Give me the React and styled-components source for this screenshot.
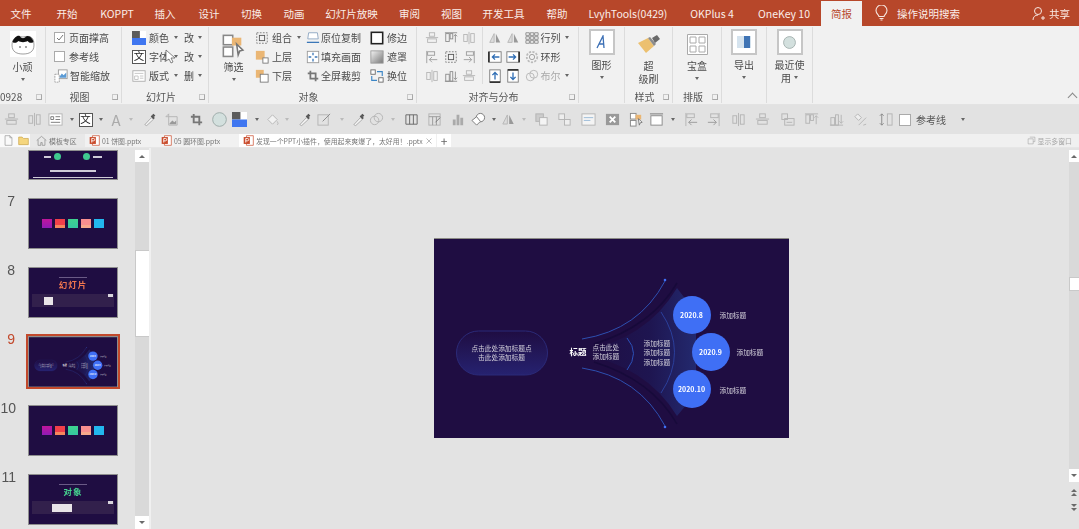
import React from 'react';
import styled, { createGlobalStyle } from 'styled-components';

const FONT = `"Noto Sans CJK SC", "Noto Sans", sans-serif`;

const GlobalStyle = createGlobalStyle`
  html, body { margin: 0; padding: 0; background: #e3e3e3; overflow: hidden; }
  * { box-sizing: border-box; }
`;

const Page = styled.div`
  width: 1079px;
  height: 529px;
  display: flex;
  flex-direction: column;
  position: relative;
  overflow: hidden;
  font-family: ${FONT};
  color: #444;
  filter: blur(0.4px);
`;

/* title bar */
const TitleBar = styled.div`
  height: 26px;
  flex: none;
  display: flex;
  background: #b7472a;
  color: #fbeee9;
  font-size: 10.5px;
`;
const TabItem = styled.div`
  width: ${p => p.$w}px;
  height: ${p => (p.$active ? 25 : 26)}px;
  margin-top: ${p => (p.$active ? 1 : 0)}px;
  display: flex;
  align-items: center;
  justify-content: center;
  white-space: nowrap;
  background: ${p => (p.$active ? '#f1f1f1' : 'transparent')};
  color: ${p => (p.$active ? '#b7472a' : 'inherit')};
`;
const SearchHint = styled.div`
  display: flex;
  align-items: center;
  gap: 9px;
  margin-left: 13px;
  width: 151px;
  white-space: nowrap;
`;
const ShareBox = styled.div`
  display: flex;
  align-items: center;
  gap: 3px;
  white-space: nowrap;
  margin-left: 6px;
`;

/* ribbon */
const Ribbon = styled.div`
  height: 78px;
  flex: none;
  display: flex;
  padding-top: 1px;
  background: #f1f1f1;
  position: relative;
`;
const Group = styled.section`
  width: ${p => p.$w}px;
  height: 76px;
  flex: none;
  display: flex;
  flex-direction: column;
  border-right: 1px solid #dcdcdc;
`;
const GroupBody = styled.div`
  flex: 1;
  min-height: 0;
  display: flex;
  padding-left: ${p => p.$pl || 0}px;
  gap: ${p => p.$gap || 0}px;
`;
const GroupLabel = styled.div`
  height: 13px;
  flex: none;
  display: flex;
  align-items: center;
  justify-content: ${p => (p.$left ? 'flex-start' : 'center')};
  padding-right: ${p => (p.$left ? 0 : 8)}px;
  font-size: 10px;
  line-height: 13px;
  color: #555;
  position: relative;
`;
const Launcher = styled.span`
  position: absolute;
  right: 3px;
  top: 4px;
  width: 6px;
  height: 6px;
  border: 1px solid #a8a8a8;
  border-top-color: #c8c8c8;
  border-left-color: #c8c8c8;
`;
const Col = styled.div`
  width: ${p => (p.$w ? `${p.$w}px` : 'auto')};
  display: flex;
  flex-direction: column;
  padding-top: 1px;
`;
const Row = styled.div`
  height: 19px;
  display: flex;
  align-items: center;
  gap: ${p => p.$gap ?? 3}px;
  font-size: 10px;
  white-space: nowrap;
  color: ${p => (p.$muted ? '#a9a9a9' : '#4a4a4a')};
`;
const Check = styled.span`
  width: ${p => p.$s || 11}px;
  height: ${p => p.$s || 11}px;
  flex: none;
  display: flex;
  align-items: center;
  justify-content: center;
  margin-right: 2px;
  background: #fff;
  border: 1px solid #aaa;
`;
const Caret = styled.span`
  width: 0;
  height: 0;
  flex: none;
  margin-left: ${p => p.$ml || 0}px;
  border-left: 2.5px solid transparent;
  border-right: 2.5px solid transparent;
  border-top: 3px solid ${p => (p.$light ? '#bbb' : '#666')};
`;
const WenBox = styled.span`
  width: 14px;
  height: 14px;
  flex: none;
  display: flex;
  align-items: center;
  justify-content: center;
  font-size: 10.5px;
  line-height: 1;
  color: #222;
  background: #fff;
  border: 1px solid #555;
`;
const BigBtn = styled.div`
  width: 100%;
  display: flex;
  flex-direction: column;
  align-items: center;
  font-size: 10px;
  line-height: 13px;
  color: #4a4a4a;
  text-align: center;
  padding-top: ${p => p.$pt ?? 2}px;
`;
const Framed = styled.div`
  width: 26px;
  height: 26px;
  display: flex;
  align-items: center;
  justify-content: center;
  background: #fff;
  border: 2px solid #c6c6c6;
  margin-bottom: 3px;
`;
const AvatarBox = styled.div`
  width: 26px;
  height: 26px;
  margin-bottom: 3px;
  background: #fff;
`;
const BigIconSlot = styled.div`
  height: ${p => p.$h}px;
  display: flex;
  align-items: center;
  justify-content: center;
`;
const CaretLine = styled.div`
  height: 13px;
  display: flex;
  align-items: center;
  justify-content: center;
  gap: 3px;
`;
const AlignGrid = styled.div`
  display: grid;
  grid-template-columns: repeat(${p => p.$cols}, ${p => p.$cell}px);
  grid-auto-rows: 19px;
  align-items: center;
  justify-items: center;
  padding-top: 1px;
  padding-right: ${p => (p.$rule ? 3 : 0)}px;
  margin-right: 3px;
  border-right: ${p => (p.$rule ? '1px solid #dcdcdc' : 'none')};
  height: 57px;
`;
const Collapse = styled.span`
  position: absolute;
  right: 3px;
  bottom: 3px;
  width: 7px;
  height: 7px;
  border-left: 1px solid #888;
  border-top: 1px solid #888;
  transform: rotate(45deg);
`;
const Pointer = styled.svg`
  position: absolute;
  left: 165px;
  top: 23px;
`;

/* quick access bar */
const Qat = styled.div`
  height: 29px;
  flex: none;
  margin-top: 1px;
  display: flex;
  align-items: center;
  background: #e2e2e2;
`;
const QatSlot = styled.div`
  width: ${p => p.$w}px;
  flex: none;
  display: flex;
  align-items: center;
  justify-content: center;
`;
const QatLabel = styled.span`
  font-size: 10px;
  color: #555;
  white-space: nowrap;
  margin-left: 3px;
  margin-right: 15px;
`;
const FontA = styled.span`
  font-size: 15px;
  line-height: 1;
  color: #aaa;
`;

/* document tabs */
const DocBar = styled.div`
  height: 14px;
  flex: none;
  display: flex;
  align-items: stretch;
  background: #f0f0f0;
  font-size: 6.9px;
  color: #777;
  border-bottom: 1px solid #e6e6e6;
`;
const DocStart = styled.div`
  width: 30px;
  display: flex;
  align-items: center;
  gap: 4px;
  padding-left: 3px;
  background: #fafafa;
`;
const DocTab = styled.div`
  width: ${p => p.$w}px;
  display: flex;
  align-items: center;
  gap: ${p => p.$gap ?? 2}px;
  padding-left: ${p => p.$pl || 5}px;
  white-space: nowrap;
  overflow: hidden;
  background: ${p => p.$bg};
`;
const PlusTab = styled.div`
  width: 14px;
  margin-left: 1px;
  display: flex;
  align-items: center;
  justify-content: center;
  background: #fff;
  font-size: 12px;
  line-height: 1;
  color: #666;
`;
const MultiWin = styled.div`
  margin-left: auto;
  padding-right: 7px;
  display: flex;
  align-items: center;
  gap: 2px;
  color: #a5a5a5;
`;

/* work area */
const Work = styled.div`
  flex: 1;
  min-height: 0;
  display: flex;
`;
const Sidebar = styled.div`
  width: 135px;
  flex: none;
  overflow: hidden;
  display: flex;
  flex-direction: column;
  gap: 18px;
  padding-top: 2px;
`;
const ThumbRow = styled.div`
  display: flex;
  flex: none;
`;
const ThumbNo = styled.div`
  width: 16px;
  margin-right: 12px;
  text-align: right;
  padding-right: ${p => (p.$wide ? 0 : 1)}px;
  font-family: "Liberation Sans", sans-serif;
  font-size: 14px;
  line-height: 16px;
  margin-top: -5px;
  color: ${p => (p.$active ? '#c2492c' : '#555')};
`;
const Thumb = styled.div`
  width: 90px;
  height: ${p => p.$h || 51}px;
  flex: none;
  display: flex;
  flex-direction: column;
  align-items: center;
  position: relative;
  overflow: ${p => (p.$active ? 'visible' : 'hidden')};
  background: #1f0d42;
  border: 1px solid #8e8e8e;
  outline: ${p => (p.$active ? '2px solid #c2492c' : 'none')};
  outline-offset: 0;
`;
const Swatches = styled.div`
  flex: 1;
  display: flex;
  align-items: center;
  justify-content: center;
  gap: 3px;
`;
const Swatch = styled.span`
  width: 10px;
  height: 9px;
  background: ${p => p.$c};
`;
const ThumbCaption = styled.div`
  width: 28px;
  margin-top: 9px;
  height: 1px;
  background: #6a5a86;
`;
const ThumbTitle = styled.div`
  font-size: 8.5px;
  line-height: 10px;
  margin-top: 1px;
  font-weight: 700;
  letter-spacing: 1px;
  color: ${p => p.$c};
`;
const ThumbBand = styled.div`
  width: 82px;
  height: 13px;
  margin-top: 5px;
  display: flex;
  align-items: center;
  padding-left: ${p => p.$pl}px;
  background: #32204c;
`;
const ThumbNote = styled.span`
  width: ${p => p.$w}px;
  height: 8px;
  background: #e8e4e8;
`;
const ThumbCorner = styled.span`
  position: absolute;
  right: 4px;
  top: 26px;
  width: 5px;
  height: 3px;
  background: #d8d4dc;
`;
const MiniTop = styled.div`
  width: 100%;
  height: 100%;
  display: flex;
  flex-direction: column;
  align-items: center;
  justify-content: flex-end;
  padding-bottom: 1px;
  gap: 5px;
`;
const MiniDots = styled.div`
  display: flex;
  align-items: center;
  gap: 3px;
  margin-bottom: 5px;
`;
const MiniDot = styled.span`
  width: 7px;
  height: 7px;
  border-radius: 50%;
  background: #3fc98f;
`;
const MiniGap = styled.span`
  width: 16px;
`;
const MiniBar = styled.span`
  width: ${p => p.$w}px;
  height: ${p => p.$h || 2}px;
  background: #cfcbd8;
`;
const ScaledSlide = styled.div`
  position: absolute;
  left: 0;
  top: 0;
  transform: scale(0.2479);
  transform-origin: 0 0;
  width: 355px;
  height: 200px;
`;
const Scroll = styled.div`
  width: ${p => p.$w}px;
  flex: none;
  display: flex;
  flex-direction: column;
  background: #d9d9d9;
  margin-top: 2px;
`;
const ScrollBtn = styled.div`
  height: ${p => p.$h || 12}px;
  flex: none;
  background: #fff;
  display: flex;
  align-items: center;
  justify-content: center;
`;
const ScrollThumb = styled.div`
  height: ${p => p.$h}px;
  flex: none;
  margin-top: ${p => p.$top}px;
  background: #fff;
  border: 1px solid #c9c9c9;
  border-right: none;
`;
const ScrollSpace = styled.div`
  flex: 1;
`;
const ArrowUp = styled.span`
  width: 0;
  height: 0;
  border-left: 3.5px solid transparent;
  border-right: 3.5px solid transparent;
  border-bottom: 3.5px solid #6a6a6a;
`;
const ArrowDown = styled(ArrowUp)`
  border-bottom: none;
  border-top: 3.5px solid #6a6a6a;
`;
const Divider = styled.div`
  width: 2px;
  flex: none;
  background: #f0f0f0;
`;
const Canvas = styled.div`
  flex: 1;
  min-width: 0;
  display: flex;
  align-items: center;
  justify-content: center;
  padding-left: 2px;
  padding-bottom: 2px;
`;
const RightRail = styled.div`
  width: 10px;
  flex: none;
  display: flex;
  flex-direction: column;
`;
const RailTrack = styled(Scroll)`
  height: 332px;
`;
const RailJump = styled.div`
  height: 15px;
  display: flex;
  flex-direction: column;
  align-items: center;
  justify-content: center;
  gap: 1px;
  margin-top: ${p => p.$mt || 0}px;
`;

/* the slide itself is a free canvas */
const SlideFrame = styled.div`
  width: 355px;
  height: 200px;
  flex: none;
  position: relative;
  background: #1f0d42;
  border-top: 1px solid #8b8b85;
  overflow: hidden;
`;
const SlideArt = styled.svg`
  position: absolute;
  left: 0;
  top: -1px;
`;
const SlideText = styled.div`
  position: absolute;
  left: ${p => p.$x}px;
  top: ${p => p.$y}px;
  width: ${p => p.$w}px;
  font-size: ${p => p.$fs || 6.7}px;
  line-height: ${p => p.$lh || 9.6}px;
  font-weight: ${p => (p.$bold ? 700 : 400)};
  color: ${p => (p.$bold ? '#fff' : '#d5d2dc')};
  text-align: ${p => p.$align || 'left'};
  white-space: nowrap;
`;
const DateNode = styled.div`
  position: absolute;
  left: ${p => p.$x - 19}px;
  top: ${p => p.$y - 20}px;
  width: 38px;
  height: 38px;
  display: flex;
  align-items: center;
  justify-content: center;
  border-radius: 50%;
  background: #3f6ff5;
  color: #fff;
  font-size: 7px;
  font-weight: 700;
`;

const GLYPHS = {
  alignTop: <><rect x="5" y="2" width="6" height="4" /><rect x="3" y="9" width="10" height="4" /><path d="M1 7.500h14" /></>,
  alignMid: <><rect x="2" y="4" width="4" height="8" /><rect x="10" y="3" width="4" height="10" /><path d="M8 1v14" /></>,
  textBox: <><rect x="1" y="2" width="14" height="12" fill="#fff" /><path d="M3 5h3v3H3zM8 5h5M8 8h5M3 11h10" stroke="#777" /></>,
  dropper: <><path d="M3 13.500l7-7.500 2 2-7 6.500z" fill="#f4f4f4" stroke="#aaa" /><path d="M10 4l3 3M11.500 2.500l2 2" stroke="#555" strokeWidth="2" /></>,
  picture: <><path d="M2 5l3-3v3zM5 5h9v9H5z" /><path d="M6 12l3-3 2 2 2-2v4H6z" fill="#999" stroke="none" /></>,
  crop: <path d="M5 2v9h9M2 5h9v9" stroke="#777" strokeWidth="2" />,
  bucket: <><path d="M3 8l5-5 5 5-5 5z" fill="#f2f2f2" /><path d="M13 10c1 2 1.500 3 0 3.500" /></>,
  penBox: <><rect x="1" y="3" width="11" height="11" /><path d="M6 10l8-8" stroke="#888" /></>,
  circles: <><circle cx="6" cy="9" r="4.500" /><circle cx="10" cy="6" r="4.500" /></>,
  columns: <path d="M2 3h12v10H2zM6 3v10M10 3v10" stroke="#666" />,
  table: <><rect x="2" y="2" width="12" height="12" /><path d="M2 5h12M6 5v9M10 5v9" stroke="#999" /><path d="M9 11l5-5" stroke="#777" /></>,
  bars: <path d="M3 8h3v6H3zM7 3h3v11H7zM11 6h3v8h-3z" fill="#aaa" stroke="none" />,
  shapes: <><circle cx="10" cy="6" r="4.500" fill="#fff" stroke="#777" /><path d="M1 9l5-4 4 5-4 4z" fill="#fff" stroke="#777" /></>,
  flip: <><path d="M7 3v10H2z" fill="#ddd" /><path d="M9 3v10h5z" fill="#999" stroke="none" /></>,
  group: <><rect x="2" y="2" width="8" height="8" fill="#ccc" /><rect x="6" y="6" width="8" height="8" fill="#f4f4f4" /></>,
  ungroup: <><rect x="2" y="2" width="6" height="6" fill="#eee" /><rect x="8" y="8" width="6" height="6" fill="#eee" /></>,
  panel: <><rect x="1" y="2" width="14" height="12" fill="#f4f4f4" /><path d="M3 6h10M3 9h7" stroke="#9bbbd8" /></>,
  xBox: <><rect x="1" y="2" width="14" height="12" fill="#999" stroke="none" /><path d="M5 5l6 6M11 5l-6 6" stroke="#fff" strokeWidth="2" /></>,
  select: <><rect x="1.500" y="1.500" width="6" height="6" fill="#fff" stroke="#888" /><rect x="1.500" y="9" width="6" height="6" fill="#fff" stroke="#888" /><path d="M7 3h6v5H7z" fill="#eab674" stroke="none" /><path d="M10 7l4 4-2 .5-1 2.500z" fill="#fff" stroke="#777" /></>,
  rect: <><path d="M1 2h14" stroke="#777" /><rect x="2" y="4" width="12" height="10" fill="#fff" stroke="#888" /></>,
  alignLeft: <><path d="M2 1v14" /><rect x="3" y="2" width="8" height="4" /><path d="M14 11H5M8 8l-3 3 3 3" stroke="#9a9a9a" /></>,
  alignRight: <><path d="M14 1v14" /><rect x="5" y="2" width="8" height="4" /><path d="M2 11h9M8 8l3 3-3 3" stroke="#9a9a9a" /></>,
  slidesDist: <><rect x="2" y="2" width="6" height="6" /><rect x="5" y="7" width="10" height="7" /><path d="M7 11h6" /></>,
  upBars: <><rect x="2" y="3" width="4" height="9" /><rect x="7" y="3" width="3" height="6" /><path d="M13 13V4M11 6l2-2 2 2M1 2h14" /></>,
  downBars: <><rect x="2" y="6" width="4" height="8" /><rect x="7" y="3" width="3" height="11" /><path d="M13 3v9M11 10l2 2 2-2M1 14h14" /></>,
  bucketPen: <><path d="M2 5l3-3 4 4-3 3z" fill="#eee" /><path d="M6 14l8-8M14 13l-3 1" /></>,
  spread: <><rect x="10" y="2" width="5" height="12" /><path d="M4 2v12M2 4l2-2 2 2M2 12l2 2 2-2" stroke="#888" /></>,
  boxDash: <><path d="M2 2h12v12H2z" strokeDasharray="2 1.500" stroke="#777" /><rect x="5" y="5" width="6" height="6" stroke="#555" /></>,
  layerUp: <><rect x="1" y="1" width="10" height="10" fill="#eab674" stroke="none" /><rect x="9" y="9" width="6" height="6" fill="#fff" stroke="#777" /></>,
  layerDown: <><rect x="1" y="1" width="9" height="9" fill="#eab674" stroke="none" /><rect x="6" y="6" width="9" height="9" fill="#fff" stroke="#777" /></>,
  placeCopy: <><path d="M3 2h10l1 7H2z" fill="#fff" stroke="#8aa4c0" /><path d="M1 13h14" stroke="#3b77b8" strokeWidth="1.500" /></>,
  fillFrame: <><rect x="1.500" y="1.500" width="13" height="13" fill="#fff" stroke="#999" /><path d="M8 3v3M8 10v3M3 8h3M10 8h3" stroke="#3b77b8" strokeWidth="1.500" /></>,
  edgeBox: <rect x="1.500" y="1.500" width="13" height="13" fill="#fff" stroke="#222" strokeWidth="1.800" />,
  maskBox: <rect x="1" y="1" width="14" height="14" fill="url(#maskFill)" stroke="#999" />,
  swap: <><rect x="1" y="1" width="5" height="5" fill="#fff" stroke="#666" /><rect x="10" y="10" width="5" height="5" fill="#fff" stroke="#666" /><path d="M8 3h6v5M8 13H2V8" stroke="#3b86c6" strokeWidth="1.300" /></>,
  arrowLeftBox: <><rect x="1" y="2" width="14" height="12" fill="#fff" stroke="#777" /><path d="M1 2v12" stroke="#333" strokeWidth="2" /><path d="M13 8H5M8 5L5 8l3 3" stroke="#2f6eb5" strokeWidth="1.500" /></>,
  arrowRightBox: <><rect x="1" y="2" width="14" height="12" fill="#fff" stroke="#777" /><path d="M15 2v12" stroke="#333" strokeWidth="2" /><path d="M3 8h8M8 5l3 3-3 3" stroke="#2f6eb5" strokeWidth="1.500" /></>,
  arrowUpBox: <><rect x="2" y="1" width="12" height="14" fill="#fff" stroke="#777" /><path d="M2 15h12" stroke="#333" strokeWidth="2" /><path d="M8 12V4M5 7l3-3 3 3" stroke="#2f6eb5" strokeWidth="1.500" /></>,
  arrowDownBox: <><rect x="2" y="1" width="12" height="14" fill="#fff" stroke="#777" /><path d="M2 1h12" stroke="#333" strokeWidth="2" /><path d="M8 4v8M5 9l3 3 3-3" stroke="#2f6eb5" strokeWidth="1.500" /></>,
  grid: <path d="M1 2h4v3H1zM6 2h4v3H6zM11 2h4v3h-4zM1 6.500h4v3H1zM6 6.500h4v3H6zM11 6.500h4v3h-4zM1 11h4v3H1zM6 11h4v3H6zM11 11h4v3h-4z" stroke="#888" />,
  ring: <><circle cx="8" cy="8" r="3" stroke="#999" /><circle cx="8" cy="8" r="6" strokeDasharray="2.500 1.500" strokeWidth="2" stroke="#bbb" /></>,
  layout: <><rect x="1" y="2" width="14" height="12" fill="#fff" stroke="#aaa" /><path d="M3 5h10M3 8h4v4H3zM9 8h4M9 10.500h4" stroke="#c0c0c0" /></>,
  viewZoom: <><rect x="5" y="1" width="10" height="10" fill="#fff" stroke="#999" /><path d="M6 9l3-4 2 2 3-3v6H6z" fill="#5b9bd5" stroke="none" /><path d="M1 6h5v9H1z" fill="#fff" stroke="#999" strokeDasharray="2 1" /></>,
  doc: <path d="M3 1h7l3 3v11H3zM10 1v3h3" stroke="#999" />,
  folder: <path d="M1 3h5l2 2h7v9H1z" fill="#f5d67e" stroke="#c9a34a" />,
  home: <path d="M1 8l7-6 7 6M3 7v8h4v-4h2v4h4V7" stroke="#888" />,
  multi: <path d="M5 2h9v8h-3M2 5h9v9H2z" stroke="#a0a0a0" />,
  close: <path d="M3 3l10 10M13 3L3 13" stroke="#777" />,
  pptx: <><path d="M5 1h10v14H5z" fill="#fff" stroke="#c94a2a" /><path d="M1 3h9v10H1z" fill="#c94a2a" stroke="none" /><path d="M4 11V5h2.500a1.600 1.600 0 010 3.500H4" stroke="#fff" strokeWidth="1.300" /></>,
};

function Glyph({ name, size = 14, stroke = '#b4b4b4' }) {
  return (
    <svg width={size} height={size} viewBox="0 0 16 16" fill="none" stroke={stroke}>
      {GLYPHS[name]}
    </svg>
  );
}

function Swatchy({ size = 15 }) {
  return (
    <svg width={size} height={size} viewBox="0 0 16 16">
      <rect width="16" height="16" fill="#fff" />
      <rect width="9" height="8" fill="#5c5c5c" />
      <rect y="8" width="16" height="8" fill="#3f76f0" />
    </svg>
  );
}

function SageCircle({ size = 14 }) {
  return (
    <svg width={size} height={size} viewBox="0 0 16 16">
      <circle cx="8" cy="8" r="7.300" fill="#d3e0de" stroke="#9caaa8" />
    </svg>
  );
}

const TABS = [
  ['文件', 42], ['开始', 50], ['KOPPT', 50], ['插入', 46], ['设计', 42], ['切换', 43],
  ['动画', 42], ['幻灯片放映', 73], ['审阅', 43], ['视图', 41], ['开发工具', 63],
  ['帮助', 44], ['LvyhTools(0429)', 98], ['OKPlus 4', 70], ['OneKey 10', 74],
];

// icon name and the x of its centre on the bar
const QAT_ITEMS = [
  ['alignTop', 10], ['alignMid', 34], ['textBox', 58], ['caret', 72], ['wen', 85], ['caret', 100],
  ['fontA', 117], ['caretLight', 130], ['dropper', 147], ['picture', 172], ['crop', 196], ['sage', 220],
  ['swatch', 241], ['caret', 256], ['bucket', 273], ['caretLight', 286], ['dropper', 303], ['penBox', 327],
  ['caretLight', 341], ['dropper', 358], ['circles', 378], ['caretLight', 392], ['columns', 410], ['table', 434],
  ['bars', 458], ['shapes', 480], ['caret', 494], ['flip', 508], ['caretLight', 523], ['group', 540],
  ['ungroup', 564], ['panel', 588], ['xBox', 612], ['select', 637], ['rect', 658], ['caret', 672],
  ['alignLeft', 691], ['alignRight', 713], ['alignMid', 738], ['alignTop', 763], ['slidesDist', 787],
  ['upBars', 812], ['downBars', 836], ['bucketPen', 860], ['spread', 884],
];

function slotWidth(i) {
  const center = QAT_ITEMS[i][1];
  const left = i === 0 ? 0 : (QAT_ITEMS[i - 1][1] + center) / 2;
  const right = i === QAT_ITEMS.length - 1 ? 899 : (center + QAT_ITEMS[i + 1][1]) / 2;
  return right - left;
}

function QatIcon({ name }) {
  if (name === 'caret') return <Caret />;
  if (name === 'caretLight') return <Caret $light />;
  if (name === 'wen') return <WenBox>文</WenBox>;
  if (name === 'fontA') return <FontA>A</FontA>;
  if (name === 'sage') return <SageCircle size={15} />;
  if (name === 'swatch') return <Swatchy size={15} />;
  return <Glyph name={name} size={15} />;
}

function DiagramArt() {
  return (
    <SlideArt width="355" height="200" viewBox="0 0 355 200" fill="none">
      <defs>
        <linearGradient id="fanFill" x1="0" x2="1" y1="0" y2="0">
          <stop offset="0" stopColor="#1f0d42" />
          <stop offset="0.6" stopColor="#1e1550" />
          <stop offset="1" stopColor="#23296e" />
        </linearGradient>
        <linearGradient id="pillFill" x1="0" x2="0" y1="0" y2="1">
          <stop offset="0" stopColor="#1f0d42" />
          <stop offset="1" stopColor="#262270" />
        </linearGradient>
      </defs>
      <rect x="22.500" y="93" width="91" height="44" rx="22" fill="url(#pillFill)" stroke="#2b2a78" />
      <path d="M145 114 Q212 102 243 50 L262 75 L262 155 L243 178 Q212 127 145 116 Z" fill="url(#fanFill)" />
      <path d="M148 101 Q205 92 231 43" stroke="#2d4fb0" strokeWidth="1" />
      <path d="M148 130 Q205 139 231 188" stroke="#2d4fb0" strokeWidth="1" />
      <circle cx="231" cy="42" r="1.300" fill="#3f6ff5" />
      <circle cx="231" cy="189" r="1.300" fill="#3f6ff5" />
      <path d="M160 106 Q218 88 243 45" stroke="#170a3a" strokeWidth="1.500" />
      <path d="M160 124 Q218 142 243 186" stroke="#170a3a" strokeWidth="1.500" />
      <path d="M227 74 Q254 114 227 155" stroke="#2b3f9b" strokeWidth="1" />
      <path d="M193 100 Q206 115 193 132" stroke="#2b50b8" strokeWidth="1" />
    </SlideArt>
  );
}

function Diagram() {
  return (
    <>
      <DiagramArt />
      <SlideText $x={22} $y={105} $w={92} $align="center">点击此处添加标题点<br />击此处添加标题</SlideText>
      <SlideText $x={136} $y={106} $w={20} $bold $fs={8.500} $lh={12}>标题</SlideText>
      <SlideText $x={159} $y={104} $w={30}>点击此处<br />添加标题</SlideText>
      <SlideText $x={210} $y={100} $w={30}>添加标题<br />添加标题<br />添加标题</SlideText>
      <DateNode $x={258} $y={77}>2020.8</DateNode>
      <DateNode $x={277} $y={114}>2020.9</DateNode>
      <DateNode $x={258} $y={151}>2020.10</DateNode>
      <SlideText $x={286} $y={72} $w={30}>添加标题</SlideText>
      <SlideText $x={303} $y={109} $w={30}>添加标题</SlideText>
      <SlideText $x={286} $y={147} $w={30}>添加标题</SlideText>
    </>
  );
}

const SWATCHES_A = ['linear-gradient(#c0159b, #8f1bb5)', 'linear-gradient(#f0404a 70%, #f5875d 70%)', 'linear-gradient(#3fd28f, #35c7a0)', 'linear-gradient(#f88f8f 70%, #f7a98c 70%)', '#22b7ee'];

function ColorThumb() {
  return (
    <Thumb>
      <Swatches>
        {SWATCHES_A.map(c => <Swatch key={c} $c={c} />)}
      </Swatches>
    </Thumb>
  );
}

function TitleThumb({ title, color, note, noteX }) {
  return (
    <Thumb>
      <ThumbCaption />
      <ThumbTitle $c={color}>{title}</ThumbTitle>
      <ThumbBand $pl={noteX}><ThumbNote $w={note} /></ThumbBand>
      <ThumbCorner />
    </Thumb>
  );
}

function DiagramThumb() {
  return (
    <Thumb $active>
      <ScaledSlide>
        <SlideFrame><Diagram /></SlideFrame>
      </ScaledSlide>
    </Thumb>
  );
}

export default function App() {
  return (
    <Page>
      <GlobalStyle />
      <svg width="0" height="0" style={{ position: 'absolute' }}>
        <defs>
          <linearGradient id="maskFill" x1="0" x2="1" y1="0" y2="1">
            <stop offset="0" stopColor="#f4f4f4" />
            <stop offset="1" stopColor="#777" />
          </linearGradient>
        </defs>
      </svg>

      <TitleBar>
        {TABS.map(([t, w]) => <TabItem key={t} $w={w}>{t}</TabItem>)}
        <TabItem $w={41} $active>简报</TabItem>
        <SearchHint>
          <svg width="13" height="16" viewBox="0 0 13 16" fill="none" stroke="#f6e6e0" strokeWidth="1.100">
            <path d="M4 11.500C3.500 9.500 1 8.500 1 5.500a5.500 5.500 0 0111 0c0 3-2.500 4-3 6zM4.500 13.500h4M5.500 15h2" />
          </svg>
          操作说明搜索
        </SearchHint>
        <ShareBox>
          <svg width="14" height="15" viewBox="0 0 14 15" fill="none" stroke="#f6e6e0">
            <circle cx="6" cy="5" r="3.500" />
            <path d="M1 14c0-3 2-5 5-5M9 12h4M11 10v4" />
          </svg>
          共享
        </ShareBox>
      </TitleBar>

      <Ribbon>
        <Group $w={46}>
          <GroupBody>
            <BigBtn $pt={4}>
              <AvatarBox>
                <svg width="26" height="26" viewBox="0 0 26 26">
                  <path d="M2 14C2 6 8 5 13 6c5-1 11-2 11 8 0 7-5 9-11 9S2 21 2 14z" fill="#fff" stroke="#777" strokeWidth=".7" />
                  <path d="M2.500 11C4 6 9 3 10.500 6c1 1.500 4 1.500 5 0C18 3 23 7 23.500 11c-3 2-5 0-6-1-2 1.500-7 1.500-9 0-1 1-3.500 3-6 1z" fill="#111" />
                  <circle cx="10" cy="16" r=".8" fill="#333" />
                  <circle cx="16" cy="16" r=".8" fill="#333" />
                </svg>
              </AvatarBox>
              小顽
              <CaretLine><Caret /></CaretLine>
            </BigBtn>
          </GroupBody>
          <GroupLabel $left>0928<Launcher /></GroupLabel>
        </Group>

        <Group $w={76}>
          <GroupBody $pl={8}>
            <Col>
              <Row $gap={2}>
                <Check>
                  <svg width="8" height="8" viewBox="0 0 8 8" fill="none" stroke="#777"><path d="M1 4l2 2 4-5" /></svg>
                </Check>
                页面撑高
              </Row>
              <Row $gap={2}><Check />参考线</Row>
              <Row $gap={2}><Glyph name="viewZoom" size={14} />智能缩放</Row>
            </Col>
          </GroupBody>
          <GroupLabel>视图<Launcher /></GroupLabel>
        </Group>

        <Group $w={87}>
          <GroupBody $pl={10} $gap={6}>
            <Col>
              <Row><Swatchy size={14} />颜色<Caret $ml={2} /></Row>
              <Row><WenBox>文</WenBox>字体<Caret $ml={2} /></Row>
              <Row><Glyph name="layout" size={14} />版式<Caret $ml={2} /></Row>
            </Col>
            <Col>
              <Row>改<Caret $ml={1} /></Row>
              <Row>改<Caret $ml={1} /></Row>
              <Row>删<Caret $ml={1} /></Row>
            </Col>
          </GroupBody>
          <GroupLabel>幻灯片<Launcher /></GroupLabel>
        </Group>

        <Group $w={208}>
          <GroupBody $pl={3}>
            <Col $w={43}>
              <BigBtn>
                <BigIconSlot $h={30}><Glyph name="select" size={25} stroke="#999" /></BigIconSlot>
                筛选
                <CaretLine><Caret /></CaretLine>
              </BigBtn>
            </Col>
            <Col $w={51}>
              <Row><Glyph name="boxDash" size={14} />组合<Caret $ml={2} /></Row>
              <Row><Glyph name="layerUp" size={14} />上层</Row>
              <Row><Glyph name="layerDown" size={14} />下层</Row>
            </Col>
            <Col $w={64}>
              <Row $gap={1}><Glyph name="placeCopy" size={14} />原位复制</Row>
              <Row $gap={1}><Glyph name="fillFrame" size={14} />填充画面</Row>
              <Row $gap={1}><Glyph name="crop" size={14} />全屏裁剪</Row>
            </Col>
            <Col>
              <Row><Glyph name="edgeBox" size={14} />修边</Row>
              <Row><Glyph name="maskBox" size={14} />遮罩</Row>
              <Row><Glyph name="swap" size={14} />换位</Row>
            </Col>
          </GroupBody>
          <GroupLabel>对象<Launcher /></GroupLabel>
        </Group>

        <Group $w={162}>
          <GroupBody $pl={6}>
            <AlignGrid $cols={3} $cell={18.5} $rule>
              <Glyph name="alignTop" />
              <Glyph name="upBars" stroke="#8a8a8a" />
              <Glyph name="alignMid" />
              <Glyph name="alignLeft" stroke="#999" />
              <Glyph name="boxDash" stroke="#999" />
              <Glyph name="alignRight" stroke="#999" />
              <Glyph name="alignMid" />
              <Glyph name="downBars" stroke="#8a8a8a" />
              <Glyph name="alignTop" />
            </AlignGrid>
            <AlignGrid $cols={2} $cell={18}>
              <Glyph name="flip" />
              <Glyph name="flip" />
              <Glyph name="arrowLeftBox" />
              <Glyph name="arrowRightBox" />
              <Glyph name="arrowUpBox" />
              <Glyph name="arrowDownBox" />
            </AlignGrid>
            <Col>
              <Row $gap={2}><Glyph name="grid" />行列<Caret $ml={2} /></Row>
              <Row $gap={2}><Glyph name="ring" />环形</Row>
              <Row $gap={2} $muted><Glyph name="circles" />布尔<Caret $ml={2} /></Row>
            </Col>
          </GroupBody>
          <GroupLabel>对齐与分布<Launcher /></GroupLabel>
        </Group>

        <Group $w={46}>
          <GroupBody>
            <BigBtn>
              <Framed>
                <svg width="14" height="14" viewBox="0 0 14 14" fill="none" stroke="#3b6fb5" strokeWidth="1.300">
                  <path d="M2 13L8 1l1 12M4 9h5" />
                </svg>
              </Framed>
              图形
              <CaretLine><Caret /></CaretLine>
            </BigBtn>
          </GroupBody>
        </Group>

        <Group $w={48}>
          <GroupBody>
            <BigBtn>
              <BigIconSlot $h={30}>
                <svg width="24" height="20" viewBox="0 0 24 20">
                  <path d="M1 9l10-5 6 8-8 7z" fill="#ecc06f" />
                  <path d="M11 4l6 8 2-2-6-7z" fill="#8b8b8b" />
                  <path d="M15 4l5-3 3 4-5 4z" fill="#6a6a6a" />
                </svg>
              </BigIconSlot>
              超<br />级刷
            </BigBtn>
          </GroupBody>
          <GroupLabel>样式<Launcher /></GroupLabel>
        </Group>

        <Group $w={49}>
          <GroupBody>
            <BigBtn>
              <BigIconSlot $h={30}>
                <svg width="21" height="21" viewBox="0 0 21 21" fill="#fff" stroke="#aaa">
                  <path d="M.5.500h20v20H.5z" />
                  <path d="M3 3h6v6H3zM12 3h6v6h-6zM3 12h6v6H3zM12 12h6v6h-6z" />
                </svg>
              </BigIconSlot>
              宝盒
              <CaretLine><Caret /></CaretLine>
            </BigBtn>
          </GroupBody>
          <GroupLabel>排版<Launcher /></GroupLabel>
        </Group>

        <Group $w={45}>
          <GroupBody>
            <BigBtn>
              <Framed>
                <svg width="14" height="12" viewBox="0 0 14 12">
                  <rect width="14" height="12" fill="#d5e3ee" />
                  <rect x="7" width="6" height="12" fill="#3f74b5" />
                </svg>
              </Framed>
              导出
              <CaretLine><Caret /></CaretLine>
            </BigBtn>
          </GroupBody>
        </Group>

        <Group $w={46}>
          <GroupBody>
            <BigBtn>
              <Framed><SageCircle size={13} /></Framed>
              最近使
              <CaretLine>用<Caret /></CaretLine>
            </BigBtn>
          </GroupBody>
        </Group>
        <Collapse />
        <Pointer width="11" height="15" viewBox="0 0 11 15">
          <path d="M1 1v11l3-2 2 4 2-1-2-4h4z" fill="#fff" stroke="#666" strokeWidth=".8" />
        </Pointer>
      </Ribbon>

      <Qat>
        {QAT_ITEMS.map(([name], i) => (
          <QatSlot key={i} $w={slotWidth(i)}><QatIcon name={name} /></QatSlot>
        ))}
        <Check $s={12} />
        <QatLabel>参考线</QatLabel>
        <Caret />
      </Qat>

      <DocBar>
        <DocStart>
          <Glyph name="doc" size={11} />
          <Glyph name="folder" size={11} />
        </DocStart>
        <DocTab $w={55} $bg="#e8e8e8" $pl={6}><Glyph name="home" size={11} />模板专区</DocTab>
        <DocTab $w={72} $bg="#f1f1f1" $pl={4}><Glyph name="pptx" size={11} />01 饼图.pptx</DocTab>
        <DocTab $w={82} $bg="#f1f1f1" $pl={4}><Glyph name="pptx" size={11} />05 圆环图.pptx</DocTab>
        <DocTab $w={197} $bg="#fff" $pl={4}>
          <Glyph name="pptx" size={11} />发现一个PPT小插件，使用起来爽爆了，太好用！.pptx
          <Glyph name="close" size={8} />
        </DocTab>
        <PlusTab>+</PlusTab>
        <MultiWin><Glyph name="multi" size={9} />显示多窗口</MultiWin>
      </DocBar>

      <Work>
        <Sidebar>
          <ThumbRow>
            <ThumbNo />
            <Thumb $h={30}>
              <MiniTop>
                <MiniDots>
                  <MiniBar $w={7} />
                  <MiniDot />
                  <MiniGap />
                  <MiniDot />
                  <MiniBar $w={9} />
                </MiniDots>
                <MiniBar $w={46} />
                <MiniBar $w={80} $h={1} />
              </MiniTop>
            </Thumb>
          </ThumbRow>
          <ThumbRow><ThumbNo>7</ThumbNo><ColorThumb /></ThumbRow>
          <ThumbRow><ThumbNo>8</ThumbNo><TitleThumb title="幻灯片" color="#f0764f" note={9} noteX={12} /></ThumbRow>
          <ThumbRow><ThumbNo $active>9</ThumbNo><DiagramThumb /></ThumbRow>
          <ThumbRow><ThumbNo $wide>10</ThumbNo><ColorThumb /></ThumbRow>
          <ThumbRow><ThumbNo $wide>11</ThumbNo><TitleThumb title="对象" color="#45d28f" note={20} noteX={20} /></ThumbRow>
        </Sidebar>
        <Scroll $w={14}>
          <ScrollBtn><ArrowUp /></ScrollBtn>
          <ScrollThumb $top={88} $h={87} />
          <ScrollSpace />
          <ScrollBtn $h={13}><ArrowDown /></ScrollBtn>
        </Scroll>
        <Divider />
        <Canvas>
          <SlideFrame><Diagram /></SlideFrame>
        </Canvas>
        <RightRail>
          <RailTrack $w={10}>
            <ScrollBtn><ArrowUp /></ScrollBtn>
            <ScrollThumb $top={115} $h={14} />
            <ScrollSpace />
            <ScrollBtn $h={13}><ArrowDown /></ScrollBtn>
          </RailTrack>
          <RailJump $mt={3}><ArrowUp /><ArrowUp /></RailJump>
          <RailJump><ArrowDown /><ArrowDown /></RailJump>
        </RightRail>
      </Work>
    </Page>
  );
}
